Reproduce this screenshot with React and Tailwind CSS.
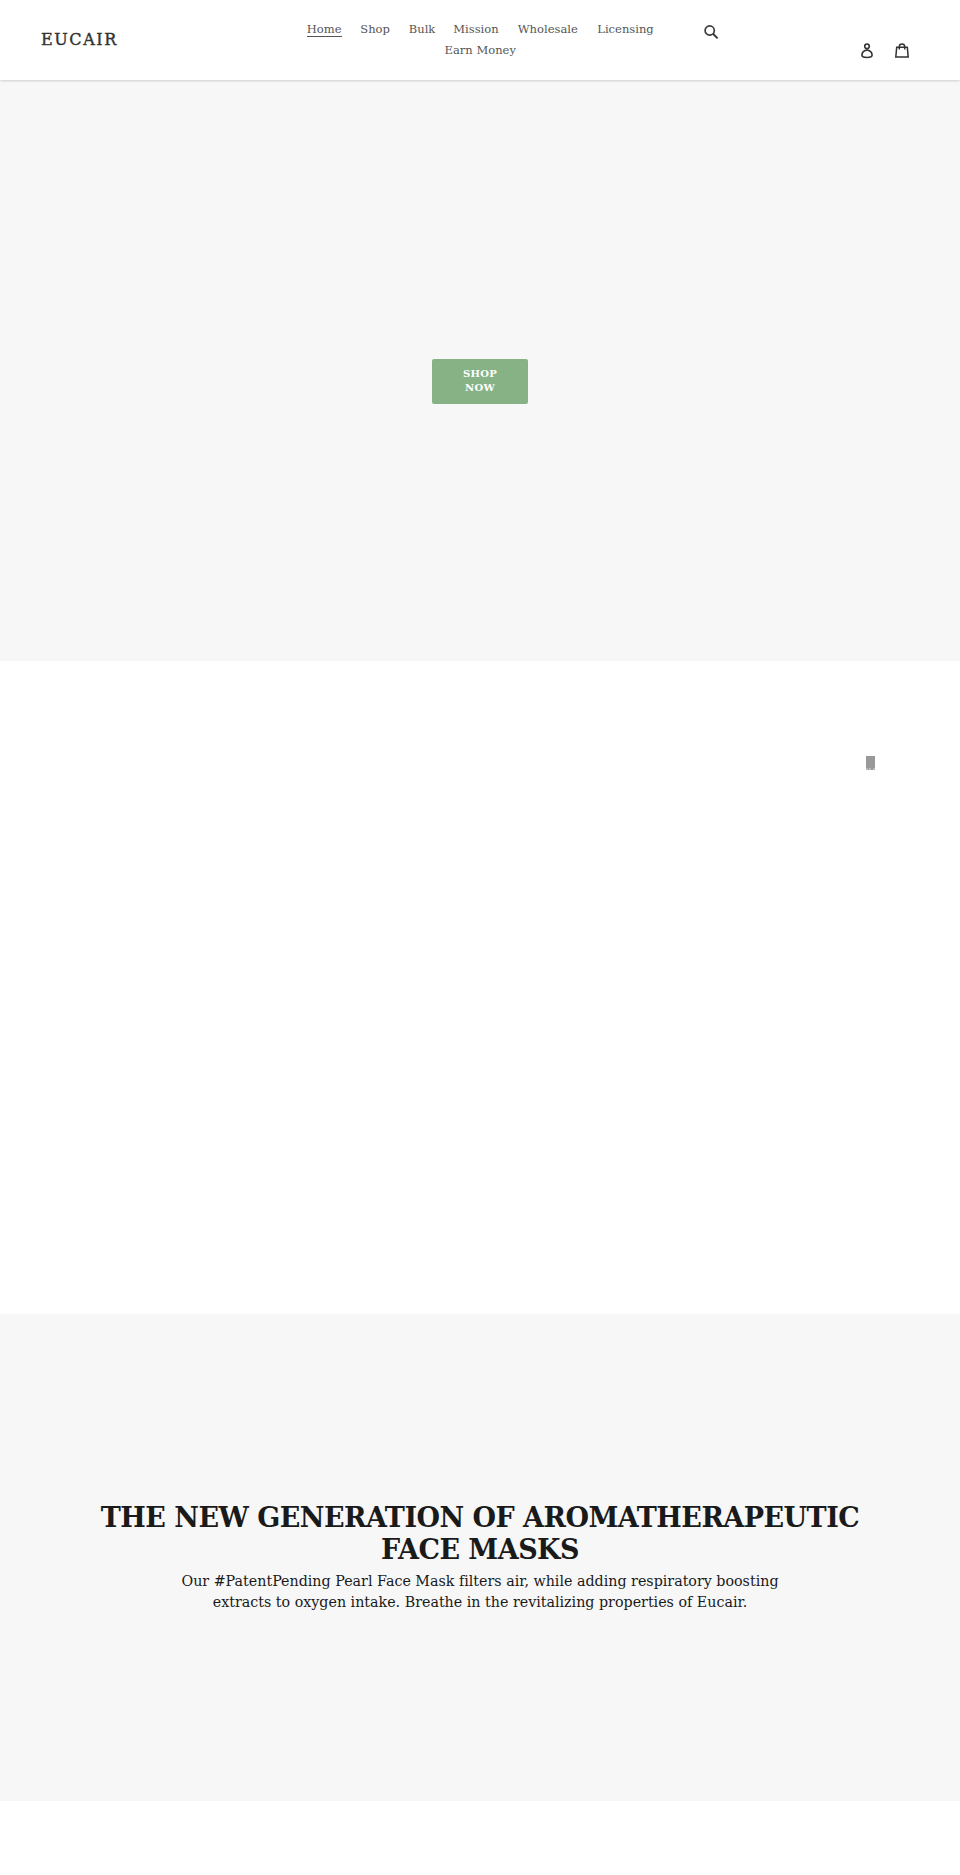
const navItems = [
    { label: 'Home', width: 'w-[35px]', active: true },
    { label: 'Shop', width: 'w-[30px]' },
    { label: 'Bulk', width: 'w-[26px]' },
    { label: 'Mission', width: 'w-[46px]' },
    { label: 'Wholesale', width: 'w-[61px]' },
    { label: 'Licensing', width: 'w-[57px]' },
    { label: 'Earn Money', width: 'w-[72px]' },
];

// --- ICONS ---
const SearchIcon = () => (
    <svg className="h-[15px] w-[15px]" viewBox="0 0 15 15" fill="none" stroke="#3a3a3a">
        <circle cx="5.7" cy="5.5" r="4.6" strokeWidth="1.7" />
        <path d="M9 8.8 13.6 13.4" strokeWidth="2" />
    </svg>
);

const AccountIcon = () => (
    <svg className="h-[16px] w-[12px]" viewBox="0 0 12 16" fill="none" stroke="#333" strokeWidth="1.6">
        <circle cx="6" cy="3.3" r="2.3" />
        <path d="M6 7.1C3.2 7.1.9 9.5.9 12c0 1.7 1.4 2.5 5.1 2.5s5.1-.8 5.1-2.5c0-2.5-2.3-4.9-5.1-4.9Z" />
    </svg>
);

const BagIcon = () => (
    <svg className="h-[16px] w-[14px]" viewBox="0 0 14 16" fill="none" stroke="#333" strokeWidth="1.5">
        <path d="M1.7 4.2h10.6l.9 9.9H.8Z" />
        <path d="M4.3 6.6V3.7C4.3 2 5.4 1 7 1s2.7 1 2.7 2.7v2.9" />
    </svg>
);

const Header = () => (
    <header className="relative flex h-20 bg-white pl-[41px] shadow-[0_0_3px_rgba(0,0,0,0.3)]">
        <a className="w-[246px] pt-[28px] text-[16px] leading-[24px] tracking-[1.6px] text-[#333] [-webkit-text-stroke:0.4px_#333]">EUCAIR</a>
        <nav className="flex w-[387px] flex-wrap content-start justify-center gap-x-[18.5px] pt-[19px]">
            {navItems.map((item) => (
                <a key={item.label} className={`${item.width} h-[21px] text-[11.5px] tracking-[0.02px] whitespace-nowrap text-[#555]`}>
                    <span className={`block h-[18px] leading-[21px] ${item.active ? 'border-b border-[#555]' : ''}`}>{item.label}</span>
                </a>
            ))}
        </nav>
        <div className="ml-[30px] pt-[25px]"><SearchIcon /></div>
        <div className="ml-auto flex gap-[22px] pt-[42.5px] pr-[51px]">
            <AccountIcon />
            <BagIcon />
        </div>
    </header>
);

export default function App() {
    return (
        <div className="min-h-[1875px] w-[960px] bg-white font-['DejaVu_Serif',serif]">
            <Header />
            <section className="flex h-[581px] justify-center bg-[#f7f7f7] pt-[278.5px]">
                <button className="h-[45px] w-[96px] rounded-[2px] bg-[#86b286] px-6 text-[10px] leading-[14px] font-bold tracking-[0.3px] text-white">
                    SHOP NOW
                </button>
            </section>
            <section className="flex h-[653px] justify-end bg-white pt-[95px] pr-[85px]">
                <div className="h-[14px] w-[9px] border-b-2 border-dotted border-[#bbb] bg-[#999]"></div>
            </section>
            <section className="h-[487px] bg-[#f7f7f7] pt-[188px] text-center">
                <h2 className="text-[27px] leading-[32px] font-bold tracking-[-0.52px] whitespace-nowrap text-[#1a1a1a]">
                    THE NEW GENERATION OF AROMATHERAPEUTIC
                    <br />
                    FACE MASKS
                </h2>
                <p className="pt-[5px] text-[14.25px] leading-[21px] tracking-[0.001px] whitespace-nowrap text-[#1a1a1a]">
                    Our #PatentPending Pearl Face Mask filters air, while adding respiratory boosting
                    <br />
                    extracts to oxygen intake. Breathe in the revitalizing properties of Eucair.
                </p>
            </section>
        </div>
    );
}
